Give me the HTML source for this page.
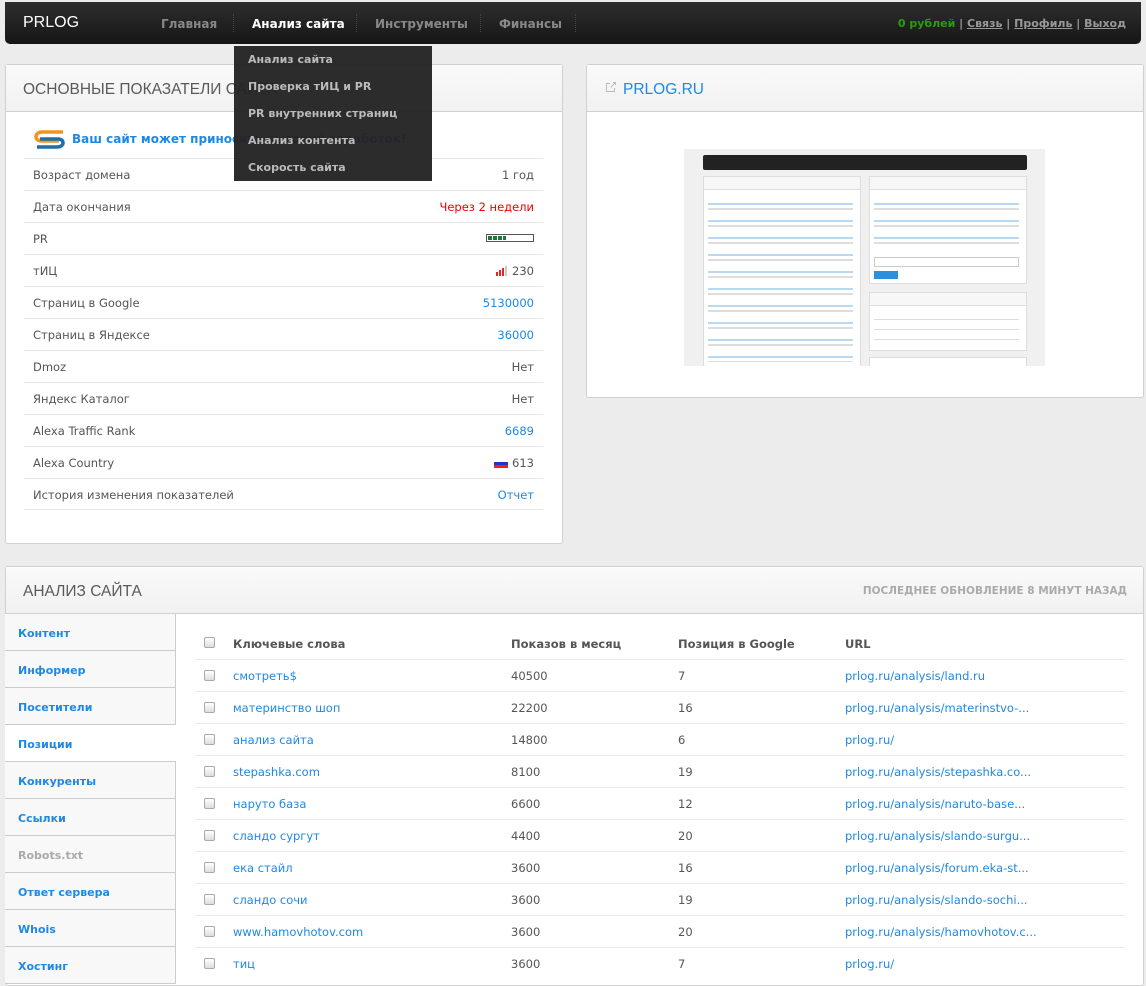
<!DOCTYPE html>
<html><head><meta charset="utf-8"><style>
*{margin:0;padding:0;box-sizing:border-box}
body{width:1146px;height:980px;overflow:hidden;background:#ececec;font-family:"DejaVu Sans","Liberation Sans",sans-serif;font-size:11.5px;color:#555;position:relative}
.a{position:absolute}
.nav{left:5px;top:2px;width:1136px;height:42px;background:linear-gradient(#2e2e2e,#161616);border-radius:0 0 5px 5px}
.nav .i{position:absolute;top:15px;font-weight:bold;font-size:12px;color:#888;white-space:nowrap}
.sep{position:absolute;top:12px;width:1px;height:18px;border-left:1px dotted #444}
.dd{left:234px;top:46px;width:198px;height:135px;background:rgba(35,35,35,.96);z-index:5}
.dd div{position:absolute;left:14px;font-weight:bold;font-size:11px;color:#bbb;white-space:nowrap}
.pan{background:#fff;border:1px solid #d0d0d0;border-radius:3px}
.hd{position:absolute;left:0;top:0;right:0;height:47px;background:linear-gradient(#fafafa,#f1f1f1);border-bottom:1px solid #d0d0d0}
.ht{position:absolute;top:16px;left:17px;font-family:"Liberation Sans",sans-serif;font-size:15.5px;color:#5a5a5a;white-space:nowrap}
.row{position:absolute;left:24px;width:519px;height:32px;border-top:1px solid #e6e6e6}
.row .l{position:absolute;left:9px;top:9px;white-space:nowrap}
.row .r{position:absolute;right:9px;top:9px;white-space:nowrap}
.bl{color:#1e88e5}
.side{left:5px;top:614px;width:171px;border-right:1px solid #ccc}
.side div{height:37px;border-bottom:1px solid #ccc;background:#f8f8f8;padding:13px 0 0 13px;font-weight:bold;font-size:11px;color:#1e88e5}
.tr{position:absolute;left:196px;width:928px;height:32px;border-top:1px solid #e8e8e8}
.tr span{position:absolute;top:9px;white-space:nowrap}
.cb{position:absolute;left:8px;top:10px;width:11px;height:11px;border:1px solid #aaa;border-radius:2px;background:linear-gradient(#fff,#ddd)}
.th{position:absolute;background:#fff;border:1px solid #ddd}
.tg{position:absolute;height:14px;background:#f7f7f7;border:1px solid #ddd}
</style></head><body>
<div class="a nav">
<div class="a" style="left:18px;top:12px;font-family:'Liberation Sans',sans-serif;font-size:16px;color:#fff">PRLOG</div>
<div class="i" style="left:156px">Главная</div><div class="sep" style="left:228px"></div>
<div class="i" style="left:247px;color:#fff">Анализ сайта</div><div class="sep" style="left:351px"></div>
<div class="i" style="left:370px">Инструменты</div><div class="sep" style="left:475px"></div>
<div class="i" style="left:494px">Финансы</div><div class="sep" style="left:570px"></div>
<div class="a" style="right:15px;top:15px;font-weight:bold;font-size:11px;color:#999;white-space:nowrap"><span style="color:#2a9d0a">0 рублей</span> | <u>Связь</u> | <u>Профиль</u> | <u>Выход</u></div>
</div>
<div class="a dd">
<div style="top:7px">Анализ сайта</div><div style="top:34px">Проверка тИЦ и PR</div><div style="top:61px">PR внутренних страниц</div><div style="top:88px">Анализ контента</div><div style="top:115px">Скорость сайта</div>
</div>
<div class="a pan" style="left:5px;top:64px;width:558px;height:480px">
<div class="hd"><div class="ht">ОСНОВНЫЕ ПОКАЗАТЕЛИ САЙТА</div></div>
</div>
<div class="a" style="left:33px;top:129px;width:34px;height:20px">
<svg width="34" height="20" viewBox="0 0 34 20"><path d="M30 3H9C4 3 3 6 3 8s2 4 6 4h17" fill="none" stroke="#f39422" stroke-width="3.5"/><path d="M7 10h18c4 0 5 2 5 4s-2 4-6 4H4" fill="none" stroke="#1e6ea8" stroke-width="3.5"/></svg></div>
<div class="a bl" style="left:72px;top:132px;font-weight:bold;font-size:12px;white-space:nowrap">Ваш сайт может приносить высокий заработок!</div>
<div class="row" style="top:158px"><span class="l">Возраст домена</span><span class="r">1 год</span></div>
<div class="row" style="top:190px"><span class="l">Дата окончания</span><span class="r" style="color:#e00">Через 2 недели</span></div>
<div class="row" style="top:222px"><span class="l">PR</span><span class="r" style="top:11px;width:48px;height:8px;border:1px solid #555;padding:1px"><span style="display:block;width:18px;height:4px;background:repeating-linear-gradient(90deg,#1a7a3a 0 4px,#fff 4px 5px)"></span></span></div>
<div class="row" style="top:254px"><span class="l">тИЦ</span><span class="r"><svg width="12" height="10" style="vertical-align:-1px"><rect x="0" y="6" width="2" height="4" fill="#e22"/><rect x="3" y="4" width="2" height="6" fill="#e22"/><rect x="6" y="2" width="2" height="8" fill="#e22"/><rect x="9" y="0" width="2" height="10" fill="#ccc"/></svg> 230</span></div>
<div class="row" style="top:286px"><span class="l">Страниц в Google</span><span class="r bl">5130000</span></div>
<div class="row" style="top:318px"><span class="l">Страниц в Яндексе</span><span class="r bl">36000</span></div>
<div class="row" style="top:350px"><span class="l">Dmoz</span><span class="r">Нет</span></div>
<div class="row" style="top:382px"><span class="l">Яндекс Каталог</span><span class="r">Нет</span></div>
<div class="row" style="top:414px"><span class="l">Alexa Traffic Rank</span><span class="r bl">6689</span></div>
<div class="row" style="top:446px"><span class="l">Alexa Country</span><span class="r"><span style="display:inline-block;width:14px;height:9px;background:linear-gradient(#fff 33%,#2233cc 33% 66%,#e22 66%);vertical-align:-1px"></span> 613</span></div>
<div class="row" style="top:478px;border-bottom:1px solid #e6e6e6"><span class="l">История изменения показателей</span><span class="r bl">Отчет</span></div>

<div class="a pan" style="left:586px;top:64px;width:558px;height:334px">
<div class="hd"><div class="ht" style="left:36px;color:#1e88e5">PRLOG.RU</div>
<svg class="a" style="left:18px;top:16px" width="12" height="12"><path d="M8 1.5H10.5V4M10.5 1.5L6 6M5 2.5H1.5V10.5H9.5V7" fill="none" stroke="#bbb"/></svg></div>
<div class="a" style="left:97px;top:84px;width:361px;height:217px;background:#f0f0f0;overflow:hidden">
<div class="a" style="left:19px;top:6px;width:324px;height:15px;background:#222;border-radius:2px"></div>
<div class="th" style="left:19px;top:27px;width:158px;height:200px"></div>
<div class="th" style="left:185px;top:27px;width:158px;height:108px"></div>
<div class="th" style="left:185px;top:143px;width:158px;height:59px"></div>
<div class="th" style="left:185px;top:208px;width:158px;height:20px"></div>
<div class="tg" style="left:19px;top:27px;width:158px"></div>
<div class="tg" style="left:185px;top:27px;width:158px"></div>
<div class="tg" style="left:185px;top:143px;width:158px"></div>
<div class="a" style="left:24px;top:48px;width:145px;height:165px;background:repeating-linear-gradient(#fff 0 6px,#b8d8f4 6px 8px,#fff 8px 11px,#ddd 11px 13px,#fff 13px 17px)"></div>
<div class="a" style="left:190px;top:48px;width:145px;height:50px;background:repeating-linear-gradient(#fff 0 6px,#b8d8f4 6px 8px,#fff 8px 11px,#ddd 11px 13px,#fff 13px 17px)"></div>
<div class="a" style="left:190px;top:108px;width:145px;height:10px;border:1px solid #ccc"></div>
<div class="a" style="left:190px;top:122px;width:24px;height:8px;background:#2a90e0"></div>
<div class="a" style="left:190px;top:163px;width:145px;height:32px;background:repeating-linear-gradient(#fff 0 7px,#ddd 7px 8px,#fff 8px 10px)"></div>
</div>
</div>

<div class="a pan" style="left:5px;top:566px;width:1139px;height:420px">
<div class="hd"><div class="ht">АНАЛИЗ САЙТА</div><div class="a" style="right:16px;top:18px;font-weight:bold;font-size:10.5px;color:#aaa">ПОСЛЕДНЕЕ ОБНОВЛЕНИЕ 8 МИНУТ НАЗАД</div></div>
</div>
<div class="a side">
<div>Контент</div><div>Информер</div><div>Посетители</div><div style="background:#fff;margin-right:-1px">Позиции</div><div>Конкуренты</div><div>Ссылки</div><div style="color:#aaa">Robots.txt</div><div>Ответ сервера</div><div>Whois</div><div>Хостинг</div>
</div>
<div class="tr" style="top:627px;border:none"><i class="cb"></i><span style="left:37px;top:10px;font-weight:bold;color:#555">Ключевые слова</span><span style="left:315px;top:10px;font-weight:bold">Показов в месяц</span><span style="left:482px;top:10px;font-weight:bold">Позиция в Google</span><span style="left:649px;top:10px;font-weight:bold">URL</span></div>
<div class="tr" style="top:659px"><i class="cb"></i><span class="bl" style="left:37px">смотреть$</span><span style="left:315px">40500</span><span style="left:482px">7</span><span class="bl" style="left:649px">prlog.ru/analysis/land.ru</span></div>
<div class="tr" style="top:691px"><i class="cb"></i><span class="bl" style="left:37px">материнство шоп</span><span style="left:315px">22200</span><span style="left:482px">16</span><span class="bl" style="left:649px">prlog.ru/analysis/materinstvo-...</span></div>
<div class="tr" style="top:723px"><i class="cb"></i><span class="bl" style="left:37px">анализ сайта</span><span style="left:315px">14800</span><span style="left:482px">6</span><span class="bl" style="left:649px">prlog.ru/</span></div>
<div class="tr" style="top:755px"><i class="cb"></i><span class="bl" style="left:37px">stepashka.com</span><span style="left:315px">8100</span><span style="left:482px">19</span><span class="bl" style="left:649px">prlog.ru/analysis/stepashka.co...</span></div>
<div class="tr" style="top:787px"><i class="cb"></i><span class="bl" style="left:37px">наруто база</span><span style="left:315px">6600</span><span style="left:482px">12</span><span class="bl" style="left:649px">prlog.ru/analysis/naruto-base...</span></div>
<div class="tr" style="top:819px"><i class="cb"></i><span class="bl" style="left:37px">сландо сургут</span><span style="left:315px">4400</span><span style="left:482px">20</span><span class="bl" style="left:649px">prlog.ru/analysis/slando-surgu...</span></div>
<div class="tr" style="top:851px"><i class="cb"></i><span class="bl" style="left:37px">ека стайл</span><span style="left:315px">3600</span><span style="left:482px">16</span><span class="bl" style="left:649px">prlog.ru/analysis/forum.eka-st...</span></div>
<div class="tr" style="top:883px"><i class="cb"></i><span class="bl" style="left:37px">сландо сочи</span><span style="left:315px">3600</span><span style="left:482px">19</span><span class="bl" style="left:649px">prlog.ru/analysis/slando-sochi...</span></div>
<div class="tr" style="top:915px"><i class="cb"></i><span class="bl" style="left:37px">www.hamovhotov.com</span><span style="left:315px">3600</span><span style="left:482px">20</span><span class="bl" style="left:649px">prlog.ru/analysis/hamovhotov.c...</span></div>
<div class="tr" style="top:947px"><i class="cb"></i><span class="bl" style="left:37px">тиц</span><span style="left:315px">3600</span><span style="left:482px">7</span><span class="bl" style="left:649px">prlog.ru/</span></div>
</body></html>
